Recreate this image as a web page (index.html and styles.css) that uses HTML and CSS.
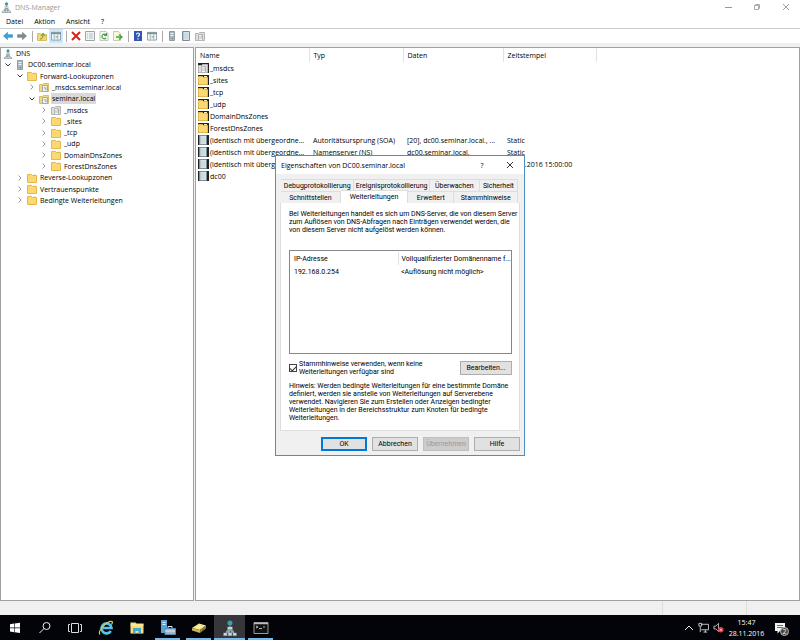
FILE: index.html
```html
<!DOCTYPE html>
<html lang="de">
<head>
    <meta charset="UTF-8">
    <meta name="viewport" content="width=device-width, initial-scale=1.0">
    <title>DNS-Manager</title>
    <link rel="stylesheet" href="styles.css">
</head>
<body>
    <!-- shared icons -->
    <svg class="sprite" aria-hidden="true">
        <symbol id="i-dns" viewBox="0 0 12 12">
            <circle cx="6" cy="2.300" r="1.900" fill="#3f9da5"/>
            <path d="M6 4v2" stroke="#77858c"/>
            <path d="M4 5h4v3H4zM3 8h3v1.500H3zM6.500 8H9v1.500H6.500zM1 9.500h3V12H1zM4.500 9.500h3V12h-3zM8 9.500h3V12H8z" fill="#93a3aa"/>
            <path d="M4.500 6h3M1.500 10.500h2M5 10.500h2M8.500 10.500h2" stroke="#dde5e8"/>
        </symbol>
        <symbol id="i-folder" viewBox="0 0 10 10">
            <path d="M.5 9.500v-8h4l1 1h4v7z" fill="#fbd871" stroke="#e3b84d"/>
            <path d="M6 1.500h3" stroke="#fff0b8"/>
        </symbol>
        <symbol id="i-zone" viewBox="0 0 10 10">
            <path d="M.5 9.500v-7h3l1-1h5v8z" fill="#f8d779" stroke="#d9bd6c"/>
            <path d="M3.500 3.500h5v6h-5z" fill="#f2f2ed" stroke="#a9aaa0"/>
            <path d="M5 5l2 3M7 5v3" stroke="#8c9ba3" stroke-width=".7"/>
        </symbol>
        <symbol id="i-grayzone" viewBox="0 0 10 10">
            <path d="M.5 9.500v-7h3l1-1h5v8z" fill="#dedede" stroke="#b4b4b4"/>
            <path d="M3.500 3.500h4v6h-4z" fill="#f4f4f4" stroke="#b2b8ba"/>
            <path d="M5 5v3M7 4v4" stroke="#9ba2a5" stroke-width=".7"/>
        </symbol>
        <symbol id="i-server" viewBox="0 0 10 10">
            <path d="M2.500.5h5v9h-5z" fill="#a9b6bb" stroke="#8f9da3"/>
            <path d="M3.500 2.500h3M3.500 4.500h3" stroke="#eef2f3"/>
            <path d="M5 7h1v1H5z" fill="#5e6b70"/>
        </symbol>
        <symbol id="i-record" viewBox="0 0 10 10">
            <path d="M1.500.5h7v9h-7z" fill="#d5e5ea" stroke="#7d8d95"/>
            <path d="M3 3h4M3 5h4M3 7h4" stroke="#b2c7ce" stroke-width=".6"/>
            <path d="M2.500 1v8" stroke="#b4c5cc"/>
        </symbol>
        <symbol id="i-panel" viewBox="0 0 11 10">
            <path d="M.5 1h10v8.500H.5z" fill="#f5f8f9" stroke="#8798a2"/>
            <path d="M0 2h11" stroke="#7b929f" stroke-width="2"/>
            <path d="M3.500 3v6M7.500 3v6" stroke="#9aaab2"/>
            <path d="M5 6h2" stroke="#4e8a4e"/>
        </symbol>
        <symbol id="i-open" viewBox="0 0 8 8"><path d="M1.500 2.500L4 5l2.500-2.500" fill="none" stroke="#333"/></symbol>
        <symbol id="i-closed" viewBox="0 0 8 8"><path d="M2.500 1.500L5 4 2.500 6.500" fill="none" stroke="#999"/></symbol>
    </svg>

    <div class="desktop">
        <div class="window">
            <header class="titlebar">
                <svg class="app-icon"><use href="#i-dns"/></svg>
                <span>DNS-Manager</span>
                <div class="window-buttons">
                    <button aria-label="Minimieren"><svg viewBox="0 0 8 8"><path d="M1 4.500h7" stroke="#999"/></svg></button>
                    <button aria-label="Verkleinern"><svg viewBox="0 0 8 8"><path d="M1.500 2.500h4v4h-4zM2.500 2.500v-1h4v4h-1" fill="none" stroke="#aaa"/></svg></button>
                    <button aria-label="Schließen"><svg viewBox="0 0 8 8"><path d="M1 1l6 6M7 1L1 7" stroke="#888" stroke-width=".8"/></svg></button>
                </div>
            </header>
            <nav class="menubar">
                <button>Datei</button>
                <button>Aktion</button>
                <button>Ansicht</button>
                <button>?</button>
            </nav>
            <div class="toolbar">
                <button aria-label="Zurück"><svg viewBox="0 0 11 10"><path d="M.5 5L5 1v2.500h5.500v3H5V9z" fill="#39a2dc" stroke="#3086b8" stroke-width=".6"/></svg></button>
                <button aria-label="Vorwärts"><svg viewBox="0 0 11 10"><path d="M10.500 5L6 1v2.500H.5v3H6V9z" fill="#818b90" stroke="#6c7478" stroke-width=".6"/></svg></button>
                <i class="sep"></i>
                <button aria-label="Nach oben"><svg viewBox="0 0 10 10"><path d="M.5 9.500v-7h3l1 1h5v6z" fill="#f6d66e" stroke="#d9bd62"/><path d="M3 8c2 0 3-1 3-4M4 5l2-3 2 3" fill="none" stroke="#46a83f"/></svg></button>
                <button class="active" aria-label="Struktur anzeigen"><svg><use href="#i-panel"/></svg></button>
                <i class="sep"></i>
                <button aria-label="Löschen"><svg viewBox="0 0 10 10"><path d="M1 1l8 8M9 1L1 9" stroke="#d62218" stroke-width="2"/></svg></button>
                <button aria-label="Eigenschaften"><svg viewBox="0 0 10 10"><path d="M.5.5h9v9h-9z" fill="#f2f3f3" stroke="#9ba5a9"/><path d="M2 3h1M4 3h4M2 5h1M4 5h4M2 7h1M4 7h4" stroke="#9ba7ad" stroke-width=".7"/></svg></button>
                <button aria-label="Aktualisieren"><svg viewBox="0 0 10 10"><path d="M1 .5h6l2 2v7H1z" fill="#f4f7f3" stroke="#a5b1a4" stroke-width=".7"/><path d="M7 4a2.300 2.300 0 1 0 0 3M7.500 2v2.500H5" fill="none" stroke="#43a43d" stroke-width="1.200"/></svg></button>
                <button aria-label="Liste exportieren"><svg viewBox="0 0 10 10"><path d="M.5.5h5l2 2v7h-7z" fill="#f7f5dc" stroke="#b7b398" stroke-width=".7"/><path d="M3 6h5M6 3.500L9 6 6 8.500" fill="none" stroke="#46a43c" stroke-width="1.300"/></svg></button>
                <i class="sep"></i>
                <button aria-label="Hilfe"><svg viewBox="0 0 10 10"><path d="M1 0h8v10H1z" fill="#3455b4"/><path d="M3.500 3.500c0-2 3-2 3 0 0 1-1.500 1-1.500 2.500M5 7.200v1.300" fill="none" stroke="#fff" stroke-width="1.200"/></svg></button>
                <button aria-label="Aktionsbereich"><svg><use href="#i-panel"/></svg></button>
                <i class="sep"></i>
                <button aria-label="Server"><svg><use href="#i-server"/></svg></button>
                <button aria-label="Eintrag"><svg><use href="#i-record"/></svg></button>
                <button aria-label="Zone"><svg><use href="#i-grayzone"/></svg></button>
            </div>

            <main class="panes">
                <ul class="tree">
                    <li class="root"><svg class="icon"><use href="#i-dns"/></svg><span>DNS</span></li>
                    <li class="l1"><svg class="arrow"><use href="#i-open"/></svg><svg class="icon"><use href="#i-server"/></svg><span>DC00.seminar.local</span></li>
                    <li class="l2"><svg class="arrow"><use href="#i-open"/></svg><svg class="icon"><use href="#i-folder"/></svg><span>Forward-Lookupzonen</span></li>
                    <li class="l3"><svg class="arrow"><use href="#i-closed"/></svg><svg class="icon"><use href="#i-zone"/></svg><span>_msdcs.seminar.local</span></li>
                    <li class="l3 selected"><svg class="arrow"><use href="#i-open"/></svg><svg class="icon"><use href="#i-zone"/></svg><span>seminar.local</span></li>
                    <li class="l4"><svg class="arrow"><use href="#i-closed"/></svg><svg class="icon"><use href="#i-grayzone"/></svg><span>_msdcs</span></li>
                    <li class="l4"><svg class="arrow"><use href="#i-closed"/></svg><svg class="icon"><use href="#i-folder"/></svg><span>_sites</span></li>
                    <li class="l4"><svg class="arrow"><use href="#i-closed"/></svg><svg class="icon"><use href="#i-folder"/></svg><span>_tcp</span></li>
                    <li class="l4"><svg class="arrow"><use href="#i-closed"/></svg><svg class="icon"><use href="#i-folder"/></svg><span>_udp</span></li>
                    <li class="l4"><svg class="arrow"><use href="#i-closed"/></svg><svg class="icon"><use href="#i-folder"/></svg><span>DomainDnsZones</span></li>
                    <li class="l4"><svg class="arrow"><use href="#i-closed"/></svg><svg class="icon"><use href="#i-folder"/></svg><span>ForestDnsZones</span></li>
                    <li class="l2"><svg class="arrow"><use href="#i-closed"/></svg><svg class="icon"><use href="#i-folder"/></svg><span>Reverse-Lookupzonen</span></li>
                    <li class="l2"><svg class="arrow"><use href="#i-closed"/></svg><svg class="icon"><use href="#i-folder"/></svg><span>Vertrauenspunkte</span></li>
                    <li class="l2"><svg class="arrow"><use href="#i-closed"/></svg><svg class="icon"><use href="#i-folder"/></svg><span>Bedingte Weiterleitungen</span></li>
                </ul>
                <div class="content">
                    <table class="records">
                        <colgroup><col class="c-name"><col class="c-type"><col class="c-data"><col class="c-time"></colgroup>
                        <thead>
                            <tr><th>Name</th><th>Typ</th><th>Daten</th><th>Zeitstempel</th></tr>
                        </thead>
                        <tbody>
                            <tr><td><div><svg><use href="#i-grayzone"/></svg><span>_msdcs</span></div></td><td></td><td></td><td></td></tr>
                            <tr><td><div><svg><use href="#i-folder"/></svg><span>_sites</span></div></td><td></td><td></td><td></td></tr>
                            <tr><td><div><svg><use href="#i-folder"/></svg><span>_tcp</span></div></td><td></td><td></td><td></td></tr>
                            <tr><td><div><svg><use href="#i-folder"/></svg><span>_udp</span></div></td><td></td><td></td><td></td></tr>
                            <tr><td><div><svg><use href="#i-folder"/></svg><span>DomainDnsZones</span></div></td><td></td><td></td><td></td></tr>
                            <tr><td><div><svg><use href="#i-folder"/></svg><span>ForestDnsZones</span></div></td><td></td><td></td><td></td></tr>
                            <tr><td><div><svg><use href="#i-record"/></svg><span>(identisch mit übergeordne...</span></div></td><td>Autoritätsursprung (SOA)</td><td>[20], dc00.seminar.local., ...</td><td>Static</td></tr>
                            <tr><td><div><svg><use href="#i-record"/></svg><span>(identisch mit übergeordne...</span></div></td><td>Namenserver (NS)</td><td>dc00.seminar.local.</td><td>Static</td></tr>
                            <tr><td><div><svg><use href="#i-record"/></svg><span>(identisch mit übergeordne...</span></div></td><td></td><td></td><td>28.11.2016 15:00:00</td></tr>
                            <tr><td><div><svg><use href="#i-record"/></svg><span>dc00</span></div></td><td></td><td></td><td></td></tr>
                        </tbody>
                    </table>
                </div>
            </main>
            <footer class="statusbar"><span></span><span></span></footer>
        </div>

        <div class="dialog" role="dialog" aria-labelledby="dlg-title">
            <div class="dialog-title">
                <span id="dlg-title">Eigenschaften von DC00.seminar.local</span>
                <button aria-label="Kontexthilfe">?</button>
                <button aria-label="Schließen"><svg viewBox="0 0 8 8"><path d="M1 1l6 6M7 1L1 7" stroke="#222" stroke-width=".9"/></svg></button>
            </div>
            <div class="dialog-body">
                <div class="tabs">
                    <button class="t-debug">Debugprotokollierung</button>
                    <button class="t-event">Ereignisprotokollierung</button>
                    <button class="t-watch">Überwachen</button>
                    <button class="t-security">Sicherheit</button>
                </div>
                <div class="tabs">
                    <button class="t-iface">Schnittstellen</button>
                    <button class="t-forward current">Weiterleitungen</button>
                    <button class="t-extended">Erweitert</button>
                    <button class="t-root">Stammhinweise</button>
                </div>
                <div class="page">
                    <p>Bei Weiterleitungen handelt es sich um DNS-Server, die von diesem Server<br>zum Auflösen von DNS-Abfragen nach Einträgen verwendet werden, die<br>von diesem Server nicht aufgelöst werden können.</p>
                    <div class="forwarders">
                        <table>
                            <colgroup><col class="c-ip"><col></colgroup>
                            <thead><tr><th>IP-Adresse</th><th>Vollqualifizierter Domänenname f...</th></tr></thead>
                            <tbody><tr><td>192.168.0.254</td><td>&lt;Auflösung nicht möglich&gt;</td></tr></tbody>
                        </table>
                    </div>
                    <div class="option">
                        <input type="checkbox" id="roothints" checked>
                        <label for="roothints">Stammhinweise verwenden, wenn keine<br>Weiterleitungen verfügbar sind</label>
                        <button class="btn">Bearbeiten...</button>
                    </div>
                    <p>Hinweis: Werden bedingte Weiterleitungen für eine bestimmte Domäne<br>definiert, werden sie anstelle von Weiterleitungen auf Serverebene<br>verwendet. Navigieren Sie zum Erstellen oder Anzeigen bedingter<br>Weiterleitungen in der Bereichsstruktur zum Knoten für bedingte<br>Weiterleitungen.</p>
                </div>
                <div class="dialog-buttons">
                    <button class="btn default">OK</button>
                    <button class="btn">Abbrechen</button>
                    <button class="btn" disabled>Übernehmen</button>
                    <button class="btn">Hilfe</button>
                </div>
            </div>
        </div>

        <div class="taskbar">
            <button aria-label="Start"><svg viewBox="0 0 16 16"><path d="M3 4.200l4-.6v4H3zM7.600 3.500L13 2.700v4.900H7.600zM3 8.200h4v4l-4-.6zM7.600 8.200H13v4.900l-5.400-.8z" fill="#fff"/></svg></button>
            <button aria-label="Suchen"><svg viewBox="0 0 16 16"><circle cx="9.500" cy="6" r="3.500" fill="none" stroke="#eee"/><path d="M7 8.500l-4.500 4.500" stroke="#eee"/></svg></button>
            <button aria-label="Taskansicht"><svg viewBox="0 0 16 16"><path d="M4.500 3.500h7v9h-7zM3 4.500H1.500v7H3M13 4.500h1.500v7H13" fill="none" stroke="#ddd"/></svg></button>
            <button class="pinned" aria-label="Internet Explorer"><svg viewBox="0 0 16 16"><path d="M12.800 11a5 5 0 1 1 .7-3H5" fill="none" stroke="#54c3ee" stroke-width="2.600"/><path d="M2 14.500C-1 11 10 0 14 1.500c1 1 0 2-.5 3" fill="none" stroke="#e6cb46" stroke-width="1.200"/></svg></button>
            <button class="pinned" aria-label="Explorer"><svg viewBox="0 0 16 16"><path d="M1.500 2.500h5l1 1h7v10h-13z" fill="#f7dc7c"/><path d="M1.500 5h13" stroke="#fff1b1"/><path d="M4 13.500V8h8v5.500H9.500V11h-3v2.500z" fill="#48a8c9"/></svg></button>
            <button class="running" aria-label="Server-Manager"><svg viewBox="0 0 16 16"><path d="M1 0h6v13H1z" fill="#51a5dc"/><path d="M2.500 2.500h3M2.500 4.500h3" stroke="#d9f0fc"/><path d="M5 8.500h10.500v6H5z" fill="#9eb7cb" stroke="#5e86a7"/><path d="M8 8V6.500h4V8M5 11h10" fill="none" stroke="#dfebf3"/></svg></button>
            <button class="running" aria-label="Paket"><svg viewBox="0 0 16 16"><path d="M1 8l7-4.500 7 2L9 10z" fill="#f5e897"/><path d="M1 8l8 2v3l-8-2.500z" fill="#cab750"/><path d="M9 10l6-4.500v3L9 13z" fill="#8e7d30"/><path d="M6 6.500l3 .8" stroke="#fffad2"/></svg></button>
            <button class="running focused" aria-label="DNS-Manager"><svg viewBox="0 0 12 12"><use href="#i-dns"/></svg></button>
            <button class="running" aria-label="Eingabeaufforderung"><svg viewBox="0 0 16 16"><path d="M1 2.500h14v11H1z" fill="#111" stroke="#999"/><path d="M1 3.500h14" stroke="#bbb" stroke-width="1.500"/><path d="M3 6l2 1-2 1M6 8.500h3M10 7h2" fill="none" stroke="#ddd" stroke-width=".8"/></svg></button>
            <div class="tray">
                <svg viewBox="0 0 10 10"><path d="M1 7l4-4 4 4" fill="none" stroke="#eee"/></svg>
                <svg viewBox="0 0 12 12" class="wide"><path d="M3.500 2.500h8v6h-8M6 11h4M8 8.500V11M1 1.500h3v3H1zM2.500 5v6" fill="none" stroke="#e5e5e5" stroke-width=".9"/></svg>
                <svg viewBox="0 0 12 12" class="wide"><path d="M1 4.500h2l3-3v9l-3-3H1z" fill="none" stroke="#eee" stroke-width=".8"/><circle cx="8.500" cy="8.500" r="3" fill="#dd3945"/><path d="M7.300 7.300l2.400 2.400M9.700 7.300L7.300 9.700" stroke="#fff" stroke-width=".7"/></svg>
                <div class="clock"><time>15:47</time><time>28.11.2016</time></div>
                <button class="notify" aria-label="Benachrichtigungen">
                    <svg viewBox="0 0 12 12"><path d="M1 1h10v8H6l-2.500 2.500V9H1z" fill="#f2f2f2"/><path d="M3 3.500h6M3 5.500h6" stroke="#333" stroke-width=".7"/></svg>
                    <span class="badge">2</span>
                </button>
            </div>
        </div>
    </div>
</body>
</html>
```
FILE: styles.css
```css
* {
    box-sizing: border-box;
}
body {
    margin: 0;
    font: 7px/11px "Open Sans", "Noto Sans", sans-serif;
    color: #000;
}
ul,
p {
    margin: 0;
    padding: 0;
    list-style: none;
}
button {
    margin: 0;
    padding: 0;
    border: 0;
    background: none;
    font: inherit;
    color: inherit;
}
svg {
    display: block;
    flex: none;
    width: 10px;
    height: 10px;
}
.sprite {
    position: absolute;
    width: 0;
    height: 0;
}
table {
    border-collapse: collapse;
    table-layout: fixed;
}
th,
td {
    padding: 0;
    font-weight: normal;
    text-align: left;
    white-space: nowrap;
}
.desktop {
    position: relative;
    display: flex;
    flex-direction: column;
    height: 100vh;
    overflow: hidden;
}

/* main window */
.window {
    flex: 1;
    min-height: 0;
    display: flex;
    flex-direction: column;
    background: #f0f0f0;
}
.titlebar {
    display: flex;
    align-items: center;
    gap: 3px;
    height: 14px;
    padding-left: 1px;
    background: #fff;
    color: #999;
}
.app-icon {
    width: 11px;
    height: 11px;
}
.window-buttons {
    display: flex;
    margin-left: auto;
}
.window-buttons button {
    display: flex;
    justify-content: center;
    width: 29px;
}
.window-buttons svg {
    width: 8px;
    height: 8px;
}
.menubar {
    display: flex;
    gap: 11px;
    height: 15px;
    padding: 0 6px;
    background: #fff;
    border-bottom: 1px solid #ccc;
}
.menubar button {
    height: 14px;
}
.toolbar {
    display: flex;
    align-items: center;
    height: 14px;
    padding-left: 1px;
    background: #fff;
}
.toolbar button {
    display: flex;
    align-items: center;
    justify-content: center;
    width: 14px;
    height: 14px;
}
.toolbar .active {
    background: #cce8ff;
}
.toolbar .sep {
    width: 1px;
    height: 11px;
    margin: 0 2px 0 3px;
    background: #aaa;
}
.panes {
    flex: 1;
    min-height: 0;
    display: grid;
    grid-template-columns: 194px 1fr;
    gap: 1px;
    padding-top: 4px;
}
.tree,
.content {
    background: #fff;
    border: 1px solid #a0a0a0;
}

/* tree */
.tree {
    display: grid;
    grid-auto-rows: minmax(11px, 1fr);
    padding-bottom: 394px;
}
.tree li {
    display: flex;
    align-items: center;
    white-space: nowrap;
}
.tree .icon {
    margin-right: 2px;
}
.tree .arrow {
    width: 8px;
    height: 8px;
    margin-right: 3px;
}
.tree span {
    padding: 0 1px;
}
.tree .root {
    padding-left: 2px;
}
.tree .l1 {
    padding-left: 3px;
}
.tree .l2 {
    padding-left: 15px;
}
.tree .l3 {
    padding-left: 27px;
}
.tree .l4 {
    padding-left: 39px;
}
.tree .selected span {
    background: #d9d9d9;
}

/* record list */
.records {
    width: 400px;
}
.c-name {
    width: 113px;
}
.c-type {
    width: 94px;
}
.c-data {
    width: 100px;
}
.c-time {
    width: 93px;
}
.records th {
    height: 14px;
    padding-left: 4px;
    border-right: 1px solid #e2e2e2;
}
.records td {
    height: 12px;
    padding-left: 4px;
}
.records td:first-child {
    padding-left: 2px;
}
.records td div {
    display: flex;
    align-items: center;
    gap: 1px;
}
.records svg {
    width: 11px;
    border-right: 1px solid #222;
    background: #222;
}
.statusbar {
    display: flex;
    justify-content: flex-end;
    height: 14px;
}
.statusbar span {
    width: 84px;
    border-left: 1px solid #ddd;
}
.statusbar span:last-child {
    width: 54px;
}

/* properties dialog */
.dialog {
    position: absolute;
    left: 275px;
    top: 155px;
    width: 250px;
    background: #f0f0f0;
    border: 1px solid #4c8fc0;
    font: 7px/8px Roboto, "Liberation Sans", sans-serif;
}
.dialog-title {
    display: flex;
    align-items: center;
    height: 18px;
    padding-left: 5px;
    background: #fff;
    font: 7px/11px "Open Sans", "Noto Sans", sans-serif;
}
.dialog-title span {
    flex: 1;
}
.dialog-title button {
    display: flex;
    justify-content: center;
    width: 28px;
}
.dialog-title svg {
    width: 8px;
    height: 8px;
}
.dialog-body {
    padding: 5px 4px 4px;
}
.tabs {
    display: flex;
    height: 12px;
    padding: 0 2px 0 1px;
}
.tabs button {
    flex: 1 1 0;
    border: 1px solid #ddd;
    border-width: 1px 1px 0 0;
    white-space: nowrap;
}
.tabs .t-debug {
    flex-grow: 74;
}
.tabs .t-event {
    flex-grow: 76;
}
.tabs .t-watch {
    flex-grow: 50;
}
.tabs .t-security {
    flex-grow: 38;
}
.tabs .t-iface {
    flex-grow: 60;
}
.tabs .t-forward {
    flex-grow: 68;
}
.tabs .t-extended {
    flex-grow: 46;
}
.tabs .t-root {
    flex-grow: 64;
}
.tabs .current {
    margin-top: -1px;
    background: #fff;
}
.page {
    padding: 7px 7px 8px 8px;
    background: #fff;
    border: 1px solid #ddd;
    border-top: 0;
}
.page p {
    white-space: nowrap;
}
.forwarders {
    height: 104px;
    margin: 16px 0 6px;
    padding: 1px 4px;
    border: 1px solid #828790;
}
.forwarders table {
    width: 100%;
}
.c-ip {
    width: 104px;
}
.forwarders th,
.forwarders td {
    height: 13px;
}
.forwarders th:first-child {
    border-right: 1px solid #e2e2e2;
}
.forwarders th + th,
.forwarders td + td {
    padding-left: 3px;
}
.option {
    display: flex;
    align-items: center;
    gap: 2px;
    margin-bottom: 6px;
}
.option input {
    appearance: none;
    display: flex;
    justify-content: center;
    width: 8px;
    height: 8px;
    margin: 0;
    border: 1px solid #444;
    background: #fff;
}
.option input:checked::before {
    content: "";
    width: 3px;
    height: 5px;
    border: solid #333;
    border-width: 0 1px 1px 0;
    transform: rotate(45deg);
}
.option .btn {
    width: 52px;
    margin-left: auto;
}
.btn {
    height: 14px;
    background: #e1e1e1;
    border: 1px solid #adadad;
}
.btn.default {
    border: 2px solid #0078d7;
}
.btn:disabled {
    background: #ccc;
    border-color: #bfbfbf;
    color: #999;
}
.dialog-buttons {
    display: flex;
    justify-content: flex-end;
    gap: 5px;
    padding-top: 6px;
}
.dialog-buttons .btn {
    width: 46px;
}

/* taskbar */
.taskbar {
    display: flex;
    height: 25px;
    background: #020409;
    color: #fff;
}
.taskbar > button {
    display: flex;
    align-items: center;
    justify-content: center;
    width: 30px;
    border: solid transparent;
    border-width: 2px 0;
}
.taskbar > button svg {
    width: 16px;
    height: 16px;
}
.taskbar > .pinned {
    width: 31px;
}
.taskbar > .running {
    width: 25px;
    margin: 0 3px;
    border-bottom-color: #76b9ed;
}
.taskbar > .focused {
    width: 31px;
    margin: 0;
    background: #35373b;
}
.tray {
    display: flex;
    align-items: center;
    gap: 4px;
    margin-left: auto;
}
.tray .wide {
    width: 11px;
    height: 11px;
}
.clock {
    display: flex;
    flex-direction: column;
    width: 37px;
    text-align: center;
}
.notify {
    position: relative;
    width: 31px;
    padding-left: 5px;
}
.notify svg {
    width: 12px;
    height: 12px;
}
.badge {
    position: absolute;
    left: 11px;
    top: 5px;
    width: 9px;
    height: 9px;
    border-radius: 50%;
    background: #444;
    border: 1px solid #bbb;
    line-height: 7px;
}
```
